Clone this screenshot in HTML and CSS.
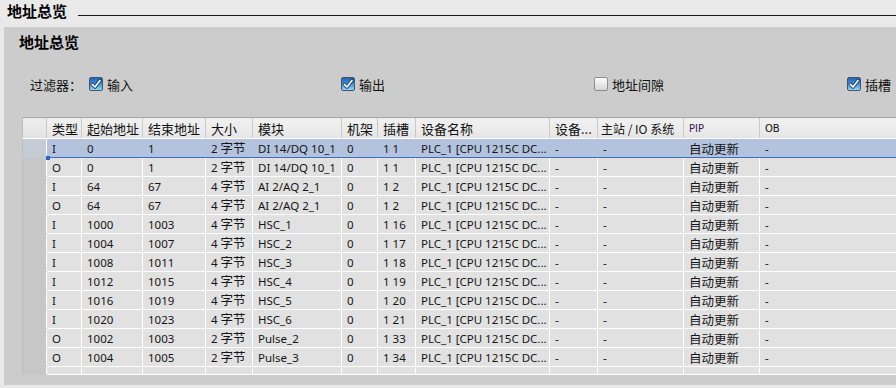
FILE: index.html
```html
<!DOCTYPE html>
<html lang="zh">
<head>
<meta charset="utf-8">
<title>地址总览</title>
<link rel="stylesheet" href="styles.css">
</head>
<body>
<div class="top">
  <span class="top-title">地址总览</span>
  <span class="top-line"></span>
</div>
<div class="panel">
  <div class="panel-title">地址总览</div>
  <div class="filters">
    <span class="filter-label">过滤器：</span>
    <label class="fitem w1"><span class="cb on"><svg viewBox="0 0 12 12" width="12" height="12"><path d="M2.3 6.3 L5 9 L10 2.6" fill="none" stroke="#173a70" stroke-width="3.4" stroke-linecap="round" stroke-linejoin="round"/><path d="M2.3 6.3 L5 9 L10 2.6" fill="none" stroke="#ffffff" stroke-width="1.7" stroke-linecap="round" stroke-linejoin="round"/></svg></span>输入</label>
    <label class="fitem w2"><span class="cb on"><svg viewBox="0 0 12 12" width="12" height="12"><path d="M2.3 6.3 L5 9 L10 2.6" fill="none" stroke="#173a70" stroke-width="3.4" stroke-linecap="round" stroke-linejoin="round"/><path d="M2.3 6.3 L5 9 L10 2.6" fill="none" stroke="#ffffff" stroke-width="1.7" stroke-linecap="round" stroke-linejoin="round"/></svg></span>输出</label>
    <label class="fitem w3"><span class="cb"></span>地址间隙</label>
    <label class="fitem"><span class="cb on"><svg viewBox="0 0 12 12" width="12" height="12"><path d="M2.3 6.3 L5 9 L10 2.6" fill="none" stroke="#173a70" stroke-width="3.4" stroke-linecap="round" stroke-linejoin="round"/><path d="M2.3 6.3 L5 9 L10 2.6" fill="none" stroke="#ffffff" stroke-width="1.7" stroke-linecap="round" stroke-linejoin="round"/></svg></span>插槽</label>
  </div>
  <div class="grid-wrap">
    <table class="grid">
      <colgroup>
        <col class="c0"><col class="c1"><col class="c2"><col class="c3"><col class="c4"><col class="c5"><col class="c6"><col class="c7"><col class="c8"><col class="c9"><col class="c10"><col class="c11"><col class="c12">
      </colgroup>
      <thead>
        <tr>
          <th class="rh"></th><th>类型</th><th>起始地址</th><th>结束地址</th><th>大小</th><th>模块</th><th>机架</th><th>插槽</th><th>设备名称</th><th>设备...</th><th class="master">主站 / IO 系统</th><th class="lat pip">PIP</th><th class="lat">OB</th>
        </tr>
      </thead>
      <tbody>
        <tr class="sel"><td class="rh"></td><td class="first">I<span class="handle"></span></td><td>0</td><td>1</td><td>2 <span class="zh">字节</span></td><td>DI 14/DQ 10_1</td><td>0</td><td>1 1</td><td>PLC_1 [CPU 1215C DC...</td><td>-</td><td>-</td><td class="zh">自动更新</td><td>-</td></tr>
        <tr><td class="rh"></td><td>O</td><td>0</td><td>1</td><td>2 <span class="zh">字节</span></td><td>DI 14/DQ 10_1</td><td>0</td><td>1 1</td><td>PLC_1 [CPU 1215C DC...</td><td>-</td><td>-</td><td class="zh">自动更新</td><td>-</td></tr>
        <tr><td class="rh"></td><td>I</td><td>64</td><td>67</td><td>4 <span class="zh">字节</span></td><td>AI 2/AQ 2_1</td><td>0</td><td>1 2</td><td>PLC_1 [CPU 1215C DC...</td><td>-</td><td>-</td><td class="zh">自动更新</td><td>-</td></tr>
        <tr><td class="rh"></td><td>O</td><td>64</td><td>67</td><td>4 <span class="zh">字节</span></td><td>AI 2/AQ 2_1</td><td>0</td><td>1 2</td><td>PLC_1 [CPU 1215C DC...</td><td>-</td><td>-</td><td class="zh">自动更新</td><td>-</td></tr>
        <tr><td class="rh"></td><td>I</td><td>1000</td><td>1003</td><td>4 <span class="zh">字节</span></td><td>HSC_1</td><td>0</td><td>1 16</td><td>PLC_1 [CPU 1215C DC...</td><td>-</td><td>-</td><td class="zh">自动更新</td><td>-</td></tr>
        <tr><td class="rh"></td><td>I</td><td>1004</td><td>1007</td><td>4 <span class="zh">字节</span></td><td>HSC_2</td><td>0</td><td>1 17</td><td>PLC_1 [CPU 1215C DC...</td><td>-</td><td>-</td><td class="zh">自动更新</td><td>-</td></tr>
        <tr><td class="rh"></td><td>I</td><td>1008</td><td>1011</td><td>4 <span class="zh">字节</span></td><td>HSC_3</td><td>0</td><td>1 18</td><td>PLC_1 [CPU 1215C DC...</td><td>-</td><td>-</td><td class="zh">自动更新</td><td>-</td></tr>
        <tr><td class="rh"></td><td>I</td><td>1012</td><td>1015</td><td>4 <span class="zh">字节</span></td><td>HSC_4</td><td>0</td><td>1 19</td><td>PLC_1 [CPU 1215C DC...</td><td>-</td><td>-</td><td class="zh">自动更新</td><td>-</td></tr>
        <tr><td class="rh"></td><td>I</td><td>1016</td><td>1019</td><td>4 <span class="zh">字节</span></td><td>HSC_5</td><td>0</td><td>1 20</td><td>PLC_1 [CPU 1215C DC...</td><td>-</td><td>-</td><td class="zh">自动更新</td><td>-</td></tr>
        <tr><td class="rh"></td><td>I</td><td>1020</td><td>1023</td><td>4 <span class="zh">字节</span></td><td>HSC_6</td><td>0</td><td>1 21</td><td>PLC_1 [CPU 1215C DC...</td><td>-</td><td>-</td><td class="zh">自动更新</td><td>-</td></tr>
        <tr><td class="rh"></td><td>O</td><td>1002</td><td>1003</td><td>2 <span class="zh">字节</span></td><td>Pulse_2</td><td>0</td><td>1 33</td><td>PLC_1 [CPU 1215C DC...</td><td>-</td><td>-</td><td class="zh">自动更新</td><td>-</td></tr>
        <tr><td class="rh"></td><td>O</td><td>1004</td><td>1005</td><td>2 <span class="zh">字节</span></td><td>Pulse_3</td><td>0</td><td>1 34</td><td>PLC_1 [CPU 1215C DC...</td><td>-</td><td>-</td><td class="zh">自动更新</td><td>-</td></tr>
        <tr class="filler"><td class="rh"></td><td></td><td></td><td></td><td></td><td></td><td></td><td></td><td></td><td></td><td></td><td></td><td></td></tr>
      </tbody>
    </table>
  </div>
</div>
</body>
</html>
```

FILE: styles.css
```css
* { box-sizing: border-box; }
html, body { margin: 0; padding: 0; }
body {
  width: 896px;
  height: 388px;
  overflow: hidden;
  background: #e9e9e9;
  font-family: "Noto Sans", "Noto Sans CJK SC", sans-serif;
  color: #111;
}
.top {
  height: 27px;
  display: flex;
  align-items: center;
  padding-left: 7px;
}
.top-title {
  font-family: "Noto Sans CJK SC", sans-serif;
  font-weight: 700;
  font-size: 15px;
  line-height: 18px;
  color: #000;
  margin-top: -6px;
}
.top-line {
  flex: 1;
  height: 0;
  border-top: 1px solid #1a1a1a;
  margin-left: 11px;
  margin-top: 4px;
}
.panel {
  margin-left: 4px;
  width: 892px;
  height: 358px;
  background: #cccccc;
  padding-top: 5px;
}
.panel-title {
  font-family: "Noto Sans CJK SC", sans-serif;
  font-weight: 700;
  font-size: 15px;
  line-height: 20px;
  padding-left: 15px;
  color: #000;
}
.filters {
  display: flex;
  align-items: center;
  margin-top: 24px;
  padding-left: 26px;
  height: 16px;
  font-family: "Noto Sans CJK SC", sans-serif;
  font-size: 13px;
  color: #111;
}
.filter-label { width: 59px; }
.fitem {
  display: flex;
  align-items: center;
  gap: 4px;
}
.w1 { width: 252px; }
.w2 { width: 253px; }
.w3 { width: 253px; }
.cb {
  width: 14px;
  height: 14px;
  border: 1px solid #8c8c8c;
  border-radius: 2px;
  background: linear-gradient(#fdfdfd, #d6d6d6);
  display: flex;
  align-items: center;
  justify-content: center;
}
.cb.on {
  border-color: #44556b;
  background: linear-gradient(#2563b3, #3f93d9 50%, #8fd8f6);
}
.grid-wrap {
  margin-top: 25px;
  margin-left: 18px;
  width: 874px;
}
.grid {
  table-layout: fixed;
  border-collapse: collapse;
  width: 874px;
  font-size: 11.5px;
}
.c0 { width: 24px; }
.c1 { width: 35px; }
.c2 { width: 61px; }
.c3 { width: 63px; }
.c4 { width: 47px; }
.c5 { width: 89px; }
.c6 { width: 36px; }
.c7 { width: 38px; }
.c8 { width: 134px; }
.c9 { width: 48px; }
.c10 { width: 86px; }
.c11 { width: 76px; }
.c12 { width: 137px; }
.grid th {
  height: 21px;
  padding: 0 0 0 5px;
  text-align: left;
  font-weight: 400;
  font-family: "Noto Sans CJK SC", sans-serif;
  font-size: 13px;
  color: #111;
  white-space: nowrap;
  overflow: hidden;
  background: linear-gradient(#f1f1f1, #e6e6e6);
  border-top: 1px solid #a9a9a9;
  border-left: 1px solid #c9c9c9;
  border-bottom: 1px solid #ffffff;
}
.grid th.master { padding-left: 3px; font-size: 12px; }
.grid th.rh { background: linear-gradient(#eeeeee, #e2e2e2); border-left: 1px solid #bdbdbd; }
.grid th.lat {
  font-family: "DejaVu Sans", sans-serif;
  font-size: 10px;
  color: #111;
}
.grid th.pip { color: #40124c; }
.grid td {
  height: 19px;
  padding: 0 0 0 5px;
  background: #e1e1e1;
  border-bottom: 1px solid #ffffff;
  border-left: 1px solid #ffffff;
  white-space: nowrap;
  overflow: hidden;
  font-size: 11.5px;
  line-height: 17px;
  color: #151515;
}
.grid .zh {
  font-family: "Noto Sans CJK SC", sans-serif;
  font-size: 12.5px;
}
.grid td.rh {
  background: #c7c7c7;
  border-left: 1px solid #bdbdbd;
  border-bottom-color: #c7c7c7;
}
.grid tr.sel td {
  background: #b3c3dd;
  border-top: 1px solid #3e6dc4;
  border-bottom: 1px solid #3e6dc4;
  border-left-color: #b3c3dd;
}
.grid tr.sel td.rh {
  background: #c6ccd6;
  border-top-color: #c6ccd6;
  border-bottom-color: #c6ccd6;
  border-left: 1px solid #bdbdbd;
}
.grid tr.sel td.first { position: relative; overflow: visible; border-left-color: #ffffff; }
.handle {
  position: absolute;
  left: -1px;
  bottom: -3px;
  width: 4px;
  height: 4px;
  background: #2f63c8;
}
.grid tr.filler td { height: 8px; }
```
